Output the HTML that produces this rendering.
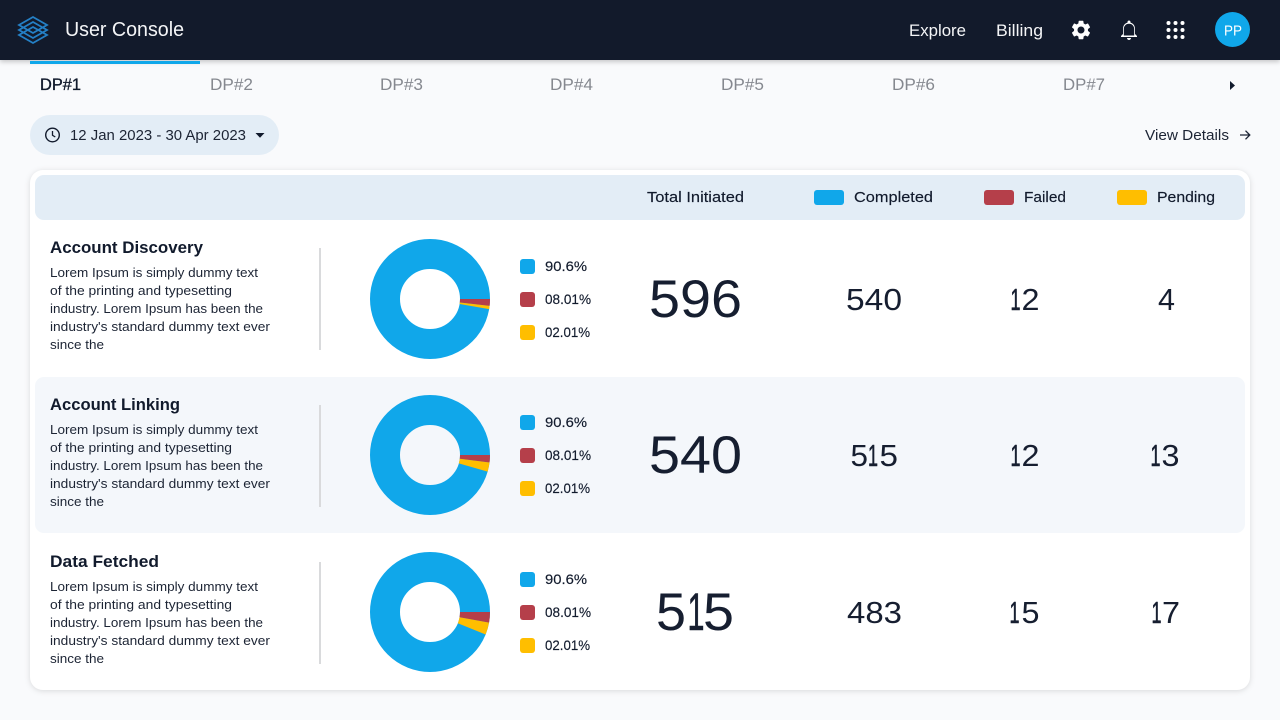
<!DOCTYPE html>
<html lang="en">
<head>
<meta charset="utf-8">
<title>User Console</title>
<style>
html,body{margin:0;padding:0;width:1280px;height:720px;overflow:hidden;background:#f9fafc}
svg{display:block}
text{font-family:"Liberation Sans",sans-serif;fill:#111a2c}
.b{font-size:13px;fill:#1c2434}
.d{fill:#1c2434}
.t{font-size:17px;font-weight:bold;fill:#111a2c}
.l{font-size:14px;stroke:#111a2c;stroke-width:.15}
.h{font-size:15px;stroke:#111a2c;stroke-width:.15}
.n{font-size:53px;fill:#161e30}
.m{font-size:31px;fill:#161e30}
.o{stroke:#161e30;stroke-width:.6}
.tab{font-size:16.5px;fill:#85888f}
.nav{font-size:17px;fill:#f4f5f7}
.w{fill:#f4f5f7}
.pp{fill:#fff}
</style>
</head>
<body>
<svg width="1280" height="720" viewBox="0 0 1280 720" xmlns="http://www.w3.org/2000/svg">
<defs>
<filter id="cs" x="-5%" y="-5%" width="110%" height="110%" color-interpolation-filters="sRGB"><feDropShadow dx="0" dy="1" stdDeviation="3" flood-color="#000" flood-opacity=".13"/></filter>
<filter id="ns" x="-5%" y="-20%" width="110%" height="150%" color-interpolation-filters="sRGB"><feDropShadow dx="0" dy="2" stdDeviation="2.500" flood-color="#000" flood-opacity=".2"/></filter>
</defs>
<rect width="1280" height="720" fill="#f9fafc"/>

<!-- tabs -->
<text x="40" y="90" font-size="16.500" textLength="41" lengthAdjust="spacingAndGlyphs" stroke="#111a2c" stroke-width=".35">DP#1</text>
<text class="tab" x="210" y="90" textLength="43" lengthAdjust="spacingAndGlyphs">DP#2</text>
<text class="tab" x="380" y="90" textLength="43" lengthAdjust="spacingAndGlyphs">DP#3</text>
<text class="tab" x="550" y="90" textLength="43" lengthAdjust="spacingAndGlyphs">DP#4</text>
<text class="tab" x="721" y="90" textLength="43" lengthAdjust="spacingAndGlyphs">DP#5</text>
<text class="tab" x="892" y="90" textLength="43" lengthAdjust="spacingAndGlyphs">DP#6</text>
<text class="tab" x="1063" y="90" textLength="42" lengthAdjust="spacingAndGlyphs">DP#7</text>
<path d="M1230 81l5 4.500-5 4.500z" fill="#111a2c"/>

<!-- date pill -->
<rect x="30" y="115" width="249" height="40" rx="20" fill="#e3edf6"/>
<circle cx="52.500" cy="135" r="6.800" fill="none" stroke="#111a2c" stroke-width="1.400"/>
<path d="M52.500 131v4.300l2.800 1.700" fill="none" stroke="#111a2c" stroke-width="1.300"/>
<text class="d" x="70" y="140" font-size="14.500" textLength="176" lengthAdjust="spacingAndGlyphs">12 Jan 2023 - 30 Apr 2023</text>
<path d="M255.500 133h9l-4.500 4.700z" fill="#111a2c"/>

<text class="d" x="1145" y="140" font-size="14.500" textLength="84" lengthAdjust="spacingAndGlyphs">View Details</text>
<path d="M1240 135h9.500M1245.500 130.700l4.300 4.300-4.300 4.300" fill="none" stroke="#1c2434" stroke-width="1.300"/>

<!-- card -->
<rect x="30" y="170" width="1220" height="520" rx="13" fill="#fff" filter="url(#cs)"/>
<rect x="35" y="175" width="1210" height="45" rx="9" fill="#e3edf6"/>
<rect x="35" y="377" width="1210" height="156" rx="9" fill="#f4f7fb"/>

<text class="h" x="647" y="202" textLength="97" lengthAdjust="spacingAndGlyphs">Total Initiated</text>
<rect x="814" y="190" width="30" height="15" rx="3" fill="#10a7ea"/>
<text class="h" x="854" y="202" textLength="79" lengthAdjust="spacingAndGlyphs">Completed</text>
<rect x="984" y="190" width="30" height="15" rx="3" fill="#b53f4a"/>
<text class="h" x="1024" y="202" textLength="42" lengthAdjust="spacingAndGlyphs">Failed</text>
<rect x="1117" y="190" width="30" height="15" rx="3" fill="#ffbe00"/>
<text class="h" x="1157" y="202" textLength="58" lengthAdjust="spacingAndGlyphs">Pending</text>

<!-- row 1 -->
<text class="t" x="50" y="253" textLength="153" lengthAdjust="spacingAndGlyphs">Account Discovery</text>
<text class="b" x="50" y="277" textLength="208" lengthAdjust="spacingAndGlyphs">Lorem Ipsum is simply dummy text</text>
<text class="b" x="50" y="295" textLength="182" lengthAdjust="spacingAndGlyphs">of the printing and typesetting</text>
<text class="b" x="50" y="313" textLength="213" lengthAdjust="spacingAndGlyphs">industry. Lorem Ipsum has been the</text>
<text class="b" x="50" y="331" textLength="220" lengthAdjust="spacingAndGlyphs">industry's standard dummy text ever</text>
<text class="b" x="50" y="349" textLength="54" lengthAdjust="spacingAndGlyphs">since the</text>
<rect x="319" y="248" width="2" height="102" fill="#d9dadc"/>
<circle cx="430" cy="299" r="45" fill="none" stroke="#10a7ea" stroke-width="30"/>
<circle cx="430" cy="299" r="45" fill="none" stroke="#b53f4a" stroke-width="30" pathLength="360" stroke-dasharray="6.700 360"/>
<circle cx="430" cy="299" r="45" fill="none" stroke="#ffbe00" stroke-width="30" pathLength="360" stroke-dasharray="3 360" stroke-dashoffset="-6.700"/>
<rect x="520" y="259" width="15" height="15" rx="3" fill="#10a7ea"/>
<text class="l" x="545" y="271" textLength="42" lengthAdjust="spacingAndGlyphs">90.6%</text>
<rect x="520" y="292" width="15" height="15" rx="3" fill="#b53f4a"/>
<text class="l" x="545" y="304" textLength="46" lengthAdjust="spacingAndGlyphs">08.01%</text>
<rect x="520" y="325" width="15" height="15" rx="3" fill="#ffbe00"/>
<text class="l" x="545" y="337" textLength="45" lengthAdjust="spacingAndGlyphs">02.01%</text>
<text class="n" x="649" y="317" textLength="93" lengthAdjust="spacingAndGlyphs">596</text>
<text class="m" x="846" y="310" textLength="56" lengthAdjust="spacingAndGlyphs">540</text>
<text class="m" y="310"><tspan class="o" x="1010.500" textLength="10" lengthAdjust="spacingAndGlyphs">1</tspan><tspan x="1021.500" textLength="18" lengthAdjust="spacingAndGlyphs">2</tspan></text>
<text class="m" x="1158" y="310" textLength="17" lengthAdjust="spacingAndGlyphs">4</text>

<!-- row 2 -->
<text class="t" x="50" y="410" textLength="130" lengthAdjust="spacingAndGlyphs">Account Linking</text>
<text class="b" x="50" y="434" textLength="208" lengthAdjust="spacingAndGlyphs">Lorem Ipsum is simply dummy text</text>
<text class="b" x="50" y="452" textLength="182" lengthAdjust="spacingAndGlyphs">of the printing and typesetting</text>
<text class="b" x="50" y="470" textLength="213" lengthAdjust="spacingAndGlyphs">industry. Lorem Ipsum has been the</text>
<text class="b" x="50" y="488" textLength="220" lengthAdjust="spacingAndGlyphs">industry's standard dummy text ever</text>
<text class="b" x="50" y="506" textLength="54" lengthAdjust="spacingAndGlyphs">since the</text>
<rect x="319" y="405" width="2" height="102" fill="#d9dadc"/>
<circle cx="430" cy="455" r="45" fill="none" stroke="#10a7ea" stroke-width="30"/>
<circle cx="430" cy="455" r="45" fill="none" stroke="#b53f4a" stroke-width="30" pathLength="360" stroke-dasharray="7.300 360"/>
<circle cx="430" cy="455" r="45" fill="none" stroke="#ffbe00" stroke-width="30" pathLength="360" stroke-dasharray="8.900 360" stroke-dashoffset="-7.300"/>
<rect x="520" y="415" width="15" height="15" rx="3" fill="#10a7ea"/>
<text class="l" x="545" y="427" textLength="42" lengthAdjust="spacingAndGlyphs">90.6%</text>
<rect x="520" y="448" width="15" height="15" rx="3" fill="#b53f4a"/>
<text class="l" x="545" y="460" textLength="46" lengthAdjust="spacingAndGlyphs">08.01%</text>
<rect x="520" y="481" width="15" height="15" rx="3" fill="#ffbe00"/>
<text class="l" x="545" y="493" textLength="45" lengthAdjust="spacingAndGlyphs">02.01%</text>
<text class="n" x="649" y="473" textLength="93" lengthAdjust="spacingAndGlyphs">540</text>
<text class="m" y="466"><tspan x="850.500" textLength="17.500" lengthAdjust="spacingAndGlyphs">5</tspan><tspan class="o" x="868" textLength="10" lengthAdjust="spacingAndGlyphs">1</tspan><tspan x="879.500" textLength="18.500" lengthAdjust="spacingAndGlyphs">5</tspan></text>
<text class="m" y="466"><tspan class="o" x="1010.500" textLength="10" lengthAdjust="spacingAndGlyphs">1</tspan><tspan x="1021.500" textLength="18" lengthAdjust="spacingAndGlyphs">2</tspan></text>
<text class="m" y="466"><tspan class="o" x="1150.500" textLength="10" lengthAdjust="spacingAndGlyphs">1</tspan><tspan x="1161.500" textLength="18" lengthAdjust="spacingAndGlyphs">3</tspan></text>

<!-- row 3 -->
<text class="t" x="50" y="567" textLength="109" lengthAdjust="spacingAndGlyphs">Data Fetched</text>
<text class="b" x="50" y="591" textLength="208" lengthAdjust="spacingAndGlyphs">Lorem Ipsum is simply dummy text</text>
<text class="b" x="50" y="609" textLength="182" lengthAdjust="spacingAndGlyphs">of the printing and typesetting</text>
<text class="b" x="50" y="627" textLength="213" lengthAdjust="spacingAndGlyphs">industry. Lorem Ipsum has been the</text>
<text class="b" x="50" y="645" textLength="220" lengthAdjust="spacingAndGlyphs">industry's standard dummy text ever</text>
<text class="b" x="50" y="663" textLength="54" lengthAdjust="spacingAndGlyphs">since the</text>
<rect x="319" y="562" width="2" height="102" fill="#d9dadc"/>
<circle cx="430" cy="612" r="45" fill="none" stroke="#10a7ea" stroke-width="30"/>
<circle cx="430" cy="612" r="45" fill="none" stroke="#b53f4a" stroke-width="30" pathLength="360" stroke-dasharray="10.200 360"/>
<circle cx="430" cy="612" r="45" fill="none" stroke="#ffbe00" stroke-width="30" pathLength="360" stroke-dasharray="11.800 360" stroke-dashoffset="-10.200"/>
<rect x="520" y="572" width="15" height="15" rx="3" fill="#10a7ea"/>
<text class="l" x="545" y="584" textLength="42" lengthAdjust="spacingAndGlyphs">90.6%</text>
<rect x="520" y="605" width="15" height="15" rx="3" fill="#b53f4a"/>
<text class="l" x="545" y="617" textLength="46" lengthAdjust="spacingAndGlyphs">08.01%</text>
<rect x="520" y="638" width="15" height="15" rx="3" fill="#ffbe00"/>
<text class="l" x="545" y="650" textLength="45" lengthAdjust="spacingAndGlyphs">02.01%</text>
<text class="n" y="630"><tspan x="656" textLength="30" lengthAdjust="spacingAndGlyphs">5</tspan><tspan class="o" x="687.500" textLength="17" lengthAdjust="spacingAndGlyphs">1</tspan><tspan x="703" textLength="31" lengthAdjust="spacingAndGlyphs">5</tspan></text>
<text class="m" x="847" y="623" textLength="55" lengthAdjust="spacingAndGlyphs">483</text>
<text class="m" y="623"><tspan class="o" x="1009.500" textLength="10" lengthAdjust="spacingAndGlyphs">1</tspan><tspan x="1021.500" textLength="18" lengthAdjust="spacingAndGlyphs">5</tspan></text>
<text class="m" y="623"><tspan class="o" x="1151.500" textLength="10" lengthAdjust="spacingAndGlyphs">1</tspan><tspan x="1162" textLength="18" lengthAdjust="spacingAndGlyphs">7</tspan></text>

<!-- navbar -->
<rect x="0" y="0" width="1280" height="60" fill="#111a2c" filter="url(#ns)"/>
<rect x="0" y="0" width="1280" height="60" fill="#121a2b"/>
<rect x="30" y="61" width="170" height="3" fill="#10a7ea"/>
<g fill="none" stroke="#2480c6" stroke-width="1.800" stroke-linejoin="miter">
<path d="M33 17l14 8-14 8-14-8z"/>
<path d="M19 30l14 8 14-8-14-8z"/>
<path d="M19 35l14 8 14-8-14-8z"/>
</g>
<text class="w" x="65" y="36" font-size="20" textLength="119" lengthAdjust="spacingAndGlyphs">User Console</text>
<text class="nav" x="909" y="36" textLength="57" lengthAdjust="spacingAndGlyphs">Explore</text>
<text class="nav" x="996" y="36" textLength="47" lengthAdjust="spacingAndGlyphs">Billing</text>
<path transform="translate(1069.360 18.360) scale(.97)" fill="#fff" d="M19.140 12.940c.04-.3.06-.61.06-.94 0-.32-.02-.64-.07-.94l2.030-1.580c.18-.14.23-.41.12-.61l-1.920-3.320c-.12-.22-.37-.29-.59-.22l-2.390.96c-.5-.38-1.030-.7-1.620-.94l-.36-2.540c-.04-.24-.24-.41-.48-.41h-3.840c-.24 0-.43.17-.47.41l-.36 2.540c-.59.24-1.130.57-1.620.94l-2.390-.96c-.22-.08-.47 0-.59.22L2.740 8.870c-.12.21-.08.47.12.61l2.030 1.580c-.05.3-.09.63-.09.94s.02.64.07.94l-2.030 1.580c-.18.14-.23.41-.12.61l1.920 3.320c.12.22.37.29.59.22l2.390-.96c.5.38 1.030.7 1.620.94l.36 2.540c.05.24.24.41.48.41h3.840c.24 0 .44-.17.47-.41l.36-2.540c.59-.24 1.130-.56 1.620-.94l2.390.96c.22.08.47 0 .59-.22l1.920-3.320c.12-.22.07-.47-.12-.61l-2.010-1.580zM12 15.600c-1.980 0-3.600-1.620-3.600-3.600s1.620-3.600 3.600-3.600 3.600 1.620 3.600 3.600-1.620 3.600-3.600 3.600z"/>
<path transform="translate(1117 18)" fill="#fff" d="M12 22c1.100 0 2-.9 2-2h-4c0 1.100.9 2 2 2zm6-6v-5c0-3.070-1.630-5.640-4.500-6.320V4c0-.83-.67-1.500-1.500-1.500s-1.500.67-1.500 1.500v.68C7.640 5.360 6 7.920 6 11v5l-2 2v1h16v-1l-2-2zm-.8 1.500H6.800V11c0-2.900 2-5.300 5.200-5.300s5.200 2.400 5.200 5.300z"/>
<g fill="#fff">
<circle cx="1168.500" cy="23" r="2"/><circle cx="1175.500" cy="23" r="2"/><circle cx="1182.500" cy="23" r="2"/>
<circle cx="1168.500" cy="30" r="2"/><circle cx="1175.500" cy="30" r="2"/><circle cx="1182.500" cy="30" r="2"/>
<circle cx="1168.500" cy="37" r="2"/><circle cx="1175.500" cy="37" r="2"/><circle cx="1182.500" cy="37" r="2"/>
</g>
<circle cx="1232.500" cy="29.500" r="17.500" fill="#10a7ea"/>
<text class="pp" x="1224" y="35.500" font-size="15" textLength="18" lengthAdjust="spacingAndGlyphs">PP</text>
</svg>
</body>
</html>
